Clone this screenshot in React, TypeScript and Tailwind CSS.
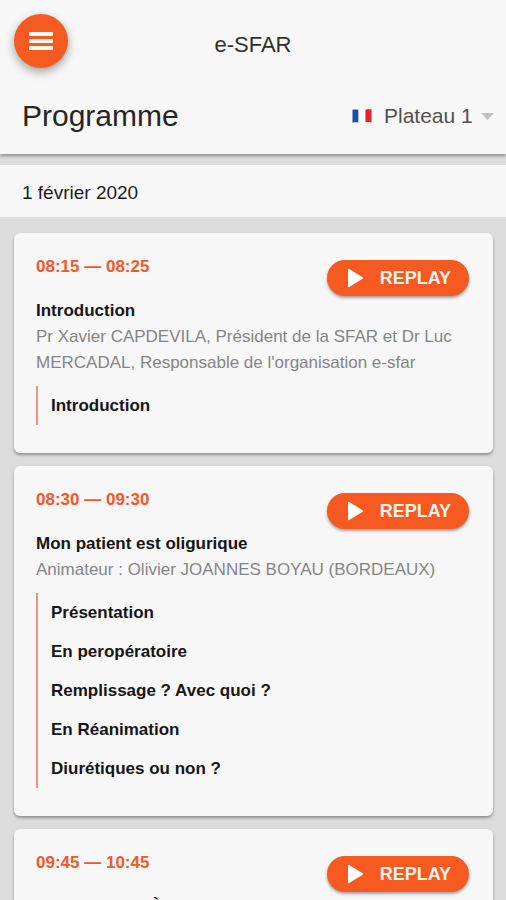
import { useState } from 'react';

interface Session {
  start: string;
  end: string;
  title: string;
  speakers?: string;
  topics: string[];
}

const sessions: Session[] = [
  {
    start: '08:15',
    end: '08:25',
    title: 'Introduction',
    speakers: "Pr Xavier CAPDEVILA, Président de la SFAR et Dr Luc MERCADAL, Responsable de l'organisation e-sfar",
    topics: ['Introduction'],
  },
  {
    start: '08:30',
    end: '09:30',
    title: 'Mon patient est oligurique',
    speakers: 'Animateur : Olivier JOANNES BOYAU (BORDEAUX)',
    topics: ['Présentation', 'En peropératoire', 'Remplissage ? Avec quoi ?', 'En Réanimation', 'Diurétiques ou non ?'],
  },
  {
    start: '09:45',
    end: '10:45',
    title: 'Le patient est À jeun',
    topics: ['Présentation'],
  },
];

function MenuIcon() {
  return (
    <svg width="26" height="20" viewBox="0 0 26 20" fill="currentColor" aria-hidden="true">
      <rect x="1" y="1" width="24" height="4" rx="1" />
      <rect x="1" y="8" width="24" height="4" rx="1" />
      <rect x="1" y="15" width="24" height="4" rx="1" />
    </svg>
  );
}

function FrenchFlag() {
  return (
    <svg width="20" height="14" viewBox="0 0 20 14" aria-hidden="true">
      <path d="M.5.8C2.500.2 4.500.6 6.600.8v12.700c-2-.3-4-.4-6.100.2z" fill="#1c4f9c" />
      <path d="M6.600.8c2.300.3 4.500.5 6.800 0v12.400c-2.300.6-4.500.6-6.800.3z" fill="#fff" />
      <path d="M13.400.8c2-.5 4-.6 6.100-.2v12.800c-2-.5-4-.5-6.100-.2z" fill="#e3262c" />
    </svg>
  );
}

function ReplayButton() {
  return (
    <button
      type="button"
      className="flex h-9 shrink-0 items-center gap-4 rounded-full bg-[#f75a20] pr-[18px] pl-5 text-lg font-bold text-[#fdf3ef] shadow-[0_2px_3px_rgba(0,0,0,0.35)]"
    >
      <svg width="17" height="20" viewBox="0 0 17 20" fill="#fff" aria-hidden="true">
        <path d="M1 1.500Q1 .3 2.200.9L15.600 9.200Q16.600 10 15.600 10.800L2.200 19.100Q1 19.700 1 18.500z" />
      </svg>
      REPLAY
    </button>
  );
}

function SessionCard({ session }: { session: Session }) {
  return (
    <article className="rounded-md bg-[#f7f7f7] pt-[27px] pr-6 pb-7 pl-[22px] shadow-[0_2px_3px_rgba(0,0,0,0.35)]">
      <div className="flex h-[38px] items-start justify-between">
        <p className="text-[17px] leading-[14px] font-bold text-[#f4582a]">
          {session.start} — {session.end}
        </p>
        <ReplayButton />
      </div>
      <h2 className="text-[17px] leading-[26px] font-bold text-[#161616]">{session.title}</h2>
      {session.speakers && <p className="text-[17px] leading-[26px] text-[#858585]">{session.speakers}</p>}
      <ul className="mt-2.5 border-l-2 border-[#f09480] pl-[13px]">
        {session.topics.map(topic => (
          <li key={topic} className="text-[17px] leading-[39px] font-bold text-[#161616]">
            {topic}
          </li>
        ))}
      </ul>
    </article>
  );
}

export default function App() {
  const [stage, setStage] = useState('1');

  return (
    <div className="flex h-screen flex-col bg-[#dcdcdc] font-['Liberation_Sans',Arial,sans-serif]">
      <header className="relative shrink-0 bg-[#f7f7f7] pb-[14px] shadow-[0_2px_3px_rgba(0,0,0,0.35)]">
        <div className="grid grid-cols-[1fr_auto_1fr] items-center px-[14px] pt-[14px]">
          <button
            type="button"
            aria-label="Menu"
            className="flex size-[54px] items-center justify-center rounded-full bg-[#f75a20] text-[#fff8f5] shadow-[0_4px_10px_rgba(0,0,0,0.35)]"
          >
            <MenuIcon />
          </button>
          <p className="pt-1.5 text-[22px] text-[#303030]">e-SFAR</p>
        </div>
        <div className="mt-6 flex items-center justify-between pr-3 pl-[22px]">
          <h1 className="text-[30px] leading-12 text-[#252525]">Programme</h1>
          <div className="flex items-center">
            <FrenchFlag />
            <select
              aria-label="Plateau"
              value={stage}
              onChange={e => setStage(e.target.value)}
              className="ml-3 h-9 appearance-none bg-transparent text-[21px] leading-9 text-[#505050]"
            >
              <option value="1">Plateau 1</option>
              <option value="2">Plateau 2</option>
            </select>
            <svg className="ml-2" width="13" height="7" viewBox="0 0 13 7" fill="#c0c0c0" aria-hidden="true">
              <path d="M0 0h13L6.500 7z" />
            </svg>
          </div>
        </div>
      </header>

      <main className="min-h-0 flex-1 overflow-y-auto pt-[11px] [scrollbar-width:none]">
        <p className="bg-[#f7f7f7] px-[22px] pt-[15px] pb-[11px] text-[19px] leading-[26px] text-[#1c1c1c]">
          1 février 2020
        </p>
        <div className="flex flex-col gap-[13px] py-4 pr-[13px] pl-[14px]">
          {sessions.map(session => (
            <SessionCard key={session.start} session={session} />
          ))}
        </div>
      </main>
    </div>
  );
}
